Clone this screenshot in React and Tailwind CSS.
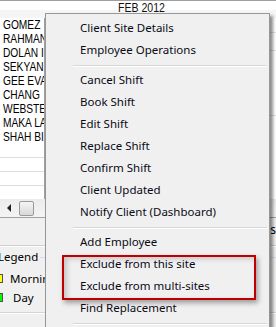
import React from 'react';

const names = ['GOMEZ', 'RAHMAN', 'DOLAN I', 'SEKYAN', 'GEE EVA', 'CHANG', 'WEBSTER', 'MAKA LA', 'SHAH BI'];

const menuItems = [
  'Client Site Details',
  'Employee Operations',
  '-',
  'Cancel Shift',
  'Book Shift',
  'Edit Shift',
  'Replace Shift',
  'Confirm Shift',
  'Client Updated',
  'Notify Client (Dashboard)',
  '-',
  'Add Employee',
  'Exclude from this site',
  'Exclude from multi-sites',
  'Find Replacement',
  '-',
];

const uiFont = { fontFamily: '"Segoe UI", "Noto Sans", sans-serif' };
const gridFont = { fontFamily: '"Liberation Sans", Arial, sans-serif' };

const App = () => {
  return (
    <div className="relative w-[276px] h-[327px] overflow-hidden bg-[#f0f0f0] text-black" style={uiFont}>
      {/* Header */}
      <div className="relative h-[18px] border-t border-[#a0a0a0] bg-white">
        <div className="absolute left-0 right-0 top-[9px] h-[8px] bg-[#f4f5f6]" />
        <span
          className="absolute left-[118px] top-[0px] text-[12px] leading-[14px] inline-block scale-x-[0.88] origin-left text-[#111]"
          style={gridFont}
        >
          FEB 2012
        </span>
      </div>

      {/* Grid body */}
      <div className="flex h-[181px]">
        <div className="w-[45px] shrink-0 bg-white border-r border-[#a0a0a0] overflow-hidden" style={gridFont}>
          {names.map((n) => (
            <div key={n} className="h-[14px] pl-[3px] text-[12px] leading-[14px] whitespace-nowrap">
              <span className="inline-block scale-x-[0.85] origin-left">{n}</span>
            </div>
          ))}
          {[0, 1, 2].map((i) => (
            <div key={i} className="h-[14px] border-b border-[#dedede]" />
          ))}
        </div>
        <div className="flex-1 bg-white">
          <div className="h-[15px] border-b border-[#e2e2e2]" />
          <div className="h-[18px] border-b border-[#e2e2e2]" />
          <div className="h-[65px] border-b border-[#e2e2e2]" />
        </div>
      </div>

      {/* Horizontal scrollbar */}
      <div className="flex items-center h-[19px] bg-gradient-to-b from-[#ececec] to-[#f4f4f4] border-b border-[#a0a0a0]">
        <div className="ml-[7px] w-0 h-0 border-y-[4px] border-y-transparent border-r-[4px] border-r-[#222]" />
        <div className="ml-[8px] w-[15px] h-[15px] rounded-[2px] border border-[#9a9a9a] bg-gradient-to-b from-[#f6f6f6] to-[#d8d8d8]" />
      </div>

      {/* Legend panel */}
      <div className="h-[27px]" />
      <div className="h-px bg-[#cfcfcf]" />
      <div className="h-px bg-white" />
      <div className="flex items-center h-[20px] text-[11.5px]">
        <span className="-ml-[2px]">Legend</span>
        <div className="flex-1 h-px bg-[#d5dfe5] ml-[2px]" />
      </div>
      <div className="flex items-center h-[19px] mt-[2px] text-[11.5px]">
        <div className="-ml-[6px] w-[9px] h-[9px] border border-[#505050] bg-[#ffff00]" />
        <span className="ml-[7px] whitespace-nowrap">Morning</span>
      </div>
      <div className="flex items-center h-[19px] text-[11.5px]">
        <div className="-ml-[6px] w-[9px] h-[9px] border border-[#505050] bg-[#00ff00]" />
        <span className="ml-[10px]">Day</span>
      </div>
      <div className="mt-[5px] h-px bg-[#d5d5d5]" />
      <div className="h-px bg-white" />
      <div className="absolute right-0 top-[224px] text-[12px] leading-[12px]">s</div>

      {/* Context menu */}
      <div className="absolute left-[45px] top-[13px] w-[225px] h-[340px] border border-[#979797] bg-[#f0f0f0] pt-[3px] shadow-[3px_3px_3px_rgba(0,0,0,0.45)]">
        {menuItems.map((item, i) =>
          item === '-' ? (
            <div key={i} className="h-[8px] pt-[4px] pl-[27px] pr-[2px]">
              <div className="h-px bg-[#d7d7d7]" />
              <div className="h-px bg-white" />
            </div>
          ) : (
            <div key={i} className="flex items-center h-[22px] pl-[34px] text-[11.5px] text-[#0a0a14] whitespace-nowrap">
              {item}
            </div>
          )
        )}
      </div>

      {/* Highlight box */}
      <div className="absolute left-[62px] top-[255px] w-[194px] h-[45px] border-2 border-[#c00000] shadow-[2px_3px_5px_rgba(0,0,0,0.35),inset_3px_2px_5px_rgba(0,0,0,0.18)]" />
    </div>
  );
};

export default App;
